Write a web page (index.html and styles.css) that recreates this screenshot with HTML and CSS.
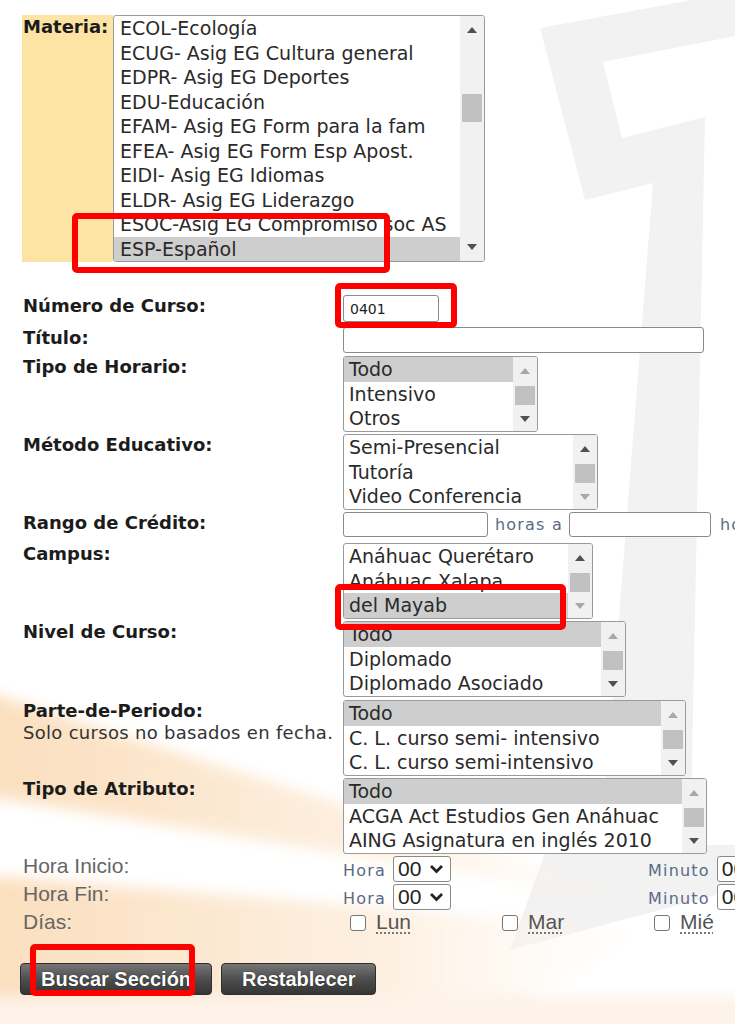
FILE: index.html
```html
<!doctype html>
<html lang="es">
<head>
    <meta charset="UTF-8">
    <meta name="viewport" content="width=device-width, initial-scale=1.0">
    <title>Consulta de Clases</title>
    <link rel="stylesheet" href="styles.css">
</head>
<body>
<svg class="backdrop" width="735" height="1024" viewBox="0 0 735 1024">
    <defs>
        <filter id="soft" x="-20%" y="-20%" width="140%" height="140%">
            <feGaussianBlur stdDeviation="7"/>
        </filter>
        <linearGradient id="glow" x1="0" y1="0" x2="1" y2="0">
            <stop offset="0" stop-color="#fbd9b2"/>
            <stop offset="0.6" stop-color="#fdeedd"/>
            <stop offset="1" stop-color="#fff8f0" stop-opacity="0"/>
        </linearGradient>
    </defs>
    <g fill="#f2f2f2">
        <path d="M540 28 L735 -8 L735 36 L603 62 L622 138 L705 117 L690 860 L600 860 L653 183 L585 200 Z"/>
        <path d="M548 845 L735 845 L735 890 L510 950 Z"/>
    </g>
    <g filter="url(#soft)" opacity="0.85">
        <path fill="url(#glow)" d="M-20 690 L660 905 L-20 795 Z"/>
        <path fill="url(#glow)" d="M-20 875 L660 930 L430 1044 L-20 1044 Z"/>
        <rect x="-20" y="996" width="820" height="50" fill="#fdf1e4"/>
    </g>
</svg>

<div class="page">
    <div class="subjectRow">
        <div class="subjectLabel">Materia:</div>
        <div class="listBox lbSubject">
            <ul class="options">
                <li>ECOL-Ecología</li>
                <li>ECUG- Asig EG Cultura general</li>
                <li>EDPR- Asig EG Deportes</li>
                <li>EDU-Educación</li>
                <li>EFAM- Asig EG Form para la fam</li>
                <li>EFEA- Asig EG Form Esp Apost.</li>
                <li>EIDI- Asig EG Idiomas</li>
                <li>ELDR- Asig EG Liderazgo</li>
                <li>ESOC-Asig EG Compromiso soc AS</li>
                <li class="selected">ESP-Español</li>
            </ul>
            <div class="scrollTrack">
                <span class="arrow up"></span>
                <span class="thumb" style="margin-top: 50px; height: 28px"></span>
                <span class="arrow down"></span>
            </div>
        </div>
    </div>

    <div class="searchForm">
        <div class="label">Número de Curso:</div>
        <div class="field"><input class="textBox wCourse" type="text" value="0401"></div>

        <div class="label">Título:</div>
        <div class="field"><input class="textBox wTitle" type="text"></div>

        <div class="label">Tipo de Horario:</div>
        <div class="field">
            <div class="listBox lbSchedule">
                <ul class="options">
                    <li class="selected">Todo</li>
                    <li>Intensivo</li>
                    <li>Otros</li>
                </ul>
                <div class="scrollTrack">
                    <span class="arrow up dim"></span>
                    <span class="thumb"></span>
                    <span class="arrow down"></span>
                </div>
            </div>
        </div>

        <div class="label">Método Educativo:</div>
        <div class="field">
            <div class="listBox lbMethod">
                <ul class="options">
                    <li>Semi-Presencial</li>
                    <li>Tutoría</li>
                    <li>Video Conferencia</li>
                </ul>
                <div class="scrollTrack">
                    <span class="arrow up"></span>
                    <span class="thumb"></span>
                    <span class="arrow down dim"></span>
                </div>
            </div>
        </div>

        <div class="label">Rango de Crédito:</div>
        <div class="field inline">
            <input class="textBox wCredit" type="text">
            <span class="unit">horas a</span>
            <input class="textBox wCredit2" type="text">
            <span class="unit after">horas</span>
        </div>

        <div class="label">Campus:</div>
        <div class="field">
            <div class="listBox lbCampus">
                <ul class="options">
                    <li>Anáhuac Querétaro</li>
                    <li>Anáhuac Xalapa</li>
                    <li class="selected">del Mayab</li>
                </ul>
                <div class="scrollTrack">
                    <span class="arrow up"></span>
                    <span class="thumb"></span>
                    <span class="arrow down dim"></span>
                </div>
            </div>
        </div>

        <div class="label">Nivel de Curso:</div>
        <div class="field">
            <div class="listBox lbLevel">
                <ul class="options">
                    <li class="selected">Todo</li>
                    <li>Diplomado</li>
                    <li>Diplomado Asociado</li>
                </ul>
                <div class="scrollTrack">
                    <span class="arrow up dim"></span>
                    <span class="thumb"></span>
                    <span class="arrow down"></span>
                </div>
            </div>
        </div>

        <div class="label">Parte-de-Periodo:<span class="note">Solo cursos no basados en fecha.</span></div>
        <div class="field">
            <div class="listBox lbPart">
                <ul class="options">
                    <li class="selected">Todo</li>
                    <li>C. L. curso semi- intensivo</li>
                    <li>C. L. curso semi-intensivo</li>
                </ul>
                <div class="scrollTrack">
                    <span class="arrow up dim"></span>
                    <span class="thumb"></span>
                    <span class="arrow down"></span>
                </div>
            </div>
        </div>

        <div class="label">Tipo de Atributo:</div>
        <div class="field">
            <div class="listBox lbAttr">
                <ul class="options">
                    <li class="selected">Todo</li>
                    <li>ACGA Act Estudios Gen Anáhuac</li>
                    <li>AING Asignatura en inglés 2010</li>
                </ul>
                <div class="scrollTrack">
                    <span class="arrow up dim"></span>
                    <span class="thumb"></span>
                    <span class="arrow down"></span>
                </div>
            </div>
        </div>

        <div class="plainLabel">Hora Inicio:</div>
        <div class="field timeRow">
            <div class="timePart">
                <span class="unit">Hora</span>
                <div class="dropBox">00<svg width="15" height="10" viewBox="0 0 15 10"><path d="M2 2 L7.5 7.5 L13 2" fill="none" stroke="#222" stroke-width="2.8"/></svg></div>
            </div>
            <div class="timePart">
                <span class="unit">Minuto</span>
                <div class="dropBox">00<svg width="15" height="10" viewBox="0 0 15 10"><path d="M2 2 L7.5 7.5 L13 2" fill="none" stroke="#222" stroke-width="2.8"/></svg></div>
            </div>
        </div>

        <div class="plainLabel">Hora Fin:</div>
        <div class="field timeRow">
            <div class="timePart">
                <span class="unit">Hora</span>
                <div class="dropBox">00<svg width="15" height="10" viewBox="0 0 15 10"><path d="M2 2 L7.5 7.5 L13 2" fill="none" stroke="#222" stroke-width="2.8"/></svg></div>
            </div>
            <div class="timePart">
                <span class="unit">Minuto</span>
                <div class="dropBox">00<svg width="15" height="10" viewBox="0 0 15 10"><path d="M2 2 L7.5 7.5 L13 2" fill="none" stroke="#222" stroke-width="2.8"/></svg></div>
            </div>
        </div>

        <div class="plainLabel">Días:</div>
        <div class="field dayGrid">
            <label class="day"><input type="checkbox"><span>Lun</span></label>
            <label class="day"><input type="checkbox"><span>Mar</span></label>
            <label class="day"><input type="checkbox"><span>Mié</span></label>
        </div>
    </div>

    <div class="actions">
        <button type="button">Buscar Sección</button>
        <button type="button">Restablecer</button>
    </div>
</div>

<div class="mark markSubject"></div>
<div class="mark markCourse"></div>
<div class="mark markCampus"></div>
<div class="mark markSearch"></div>
</body>
</html>
```

FILE: styles.css
```css
html, body {
    margin: 0;
    height: 100%;
    overflow: hidden;
}
body {
    position: relative;
    background: #fff;
    font-family: "DejaVu Sans", Verdana, sans-serif;
    color: #222;
}
.backdrop {
    position: absolute;
    top: 0;
    left: 0;
    z-index: -1;
}
.page {
    padding: 15px 0 0 22px;
}

.subjectRow {
    display: flex;
}
.subjectLabel {
    width: 91px;
    height: 247px;
    box-sizing: border-box;
    padding: 1px 0 0 1px;
    background: #fde4a4;
    font-size: 18px;
    font-weight: bold;
    line-height: 22px;
    color: #1c1c1c;
}

.listBox {
    display: flex;
    height: 76px;
    box-sizing: border-box;
    border: 1px solid #9a9a9a;
    border-radius: 3px;
    background: #fff;
    overflow: hidden;
}
.lbSubject { width: 372px; height: 247px; }
.lbSchedule { width: 195px; }
.lbMethod { width: 255px; }
.lbCampus { width: 250px; }
.lbLevel { width: 283px; }
.lbPart { width: 343px; }
.lbAttr { width: 364px; }

.options {
    flex: 1;
    min-width: 0;
    list-style: none;
    margin: 0;
    padding: 0;
}
.options li {
    height: 24.5px;
    padding-left: 5px;
    font-size: 19px;
    line-height: 24.5px;
    white-space: nowrap;
    overflow: hidden;
    color: #2a2a2a;
}
.lbSubject .options li {
    padding-left: 6px;
}
.options li.selected {
    background: #cecece;
}

.scrollTrack {
    display: flex;
    flex-direction: column;
    flex: none;
    width: 24px;
    background: #f1f1f1;
}
.arrow {
    display: flex;
    flex: none;
    align-items: center;
    justify-content: center;
    height: 28px;
    color: #505050;
}
.arrow.dim {
    color: #a8a8a8;
}
.arrow::after {
    content: "";
    border-left: 5px solid transparent;
    border-right: 5px solid transparent;
}
.arrow.up::after {
    border-bottom: 6px solid currentColor;
}
.arrow.down {
    margin-top: auto;
}
.arrow.down::after {
    border-top: 6px solid currentColor;
}
.thumb {
    flex: none;
    height: 19px;
    margin: 1px 2px 0;
    background: #c1c1c1;
}

.searchForm {
    display: grid;
    grid-template-columns: 320px 1fr;
    grid-template-rows: 32px 29px 78px 78px 31px 78px 79px 78px 78px 28px 28px 51px;
    margin-top: 33px;
    padding-left: 1px;
}
.label {
    font-size: 18px;
    font-weight: bold;
    line-height: 22px;
    color: #1c1c1c;
    white-space: nowrap;
}
.label .note {
    display: block;
    font-weight: normal;
    letter-spacing: 0.3px;
    line-height: 21px;
    color: #333;
}
.plainLabel {
    font-family: "Liberation Sans", Arial, sans-serif;
    font-size: 21px;
    line-height: 20px;
    color: #666;
}
.field {
    min-width: 0;
    white-space: nowrap;
}
.inline {
    display: flex;
    align-items: flex-start;
}

.textBox {
    display: block;
    flex: none;
    height: 27px;
    margin: 0;
    padding: 0 6px;
    box-sizing: border-box;
    border: 1px solid #8a8a8a;
    border-radius: 3px;
    background: #fff;
    font-family: "DejaVu Sans", Verdana, sans-serif;
    font-size: 14px;
    color: #222;
    outline: none;
}
.wCourse { width: 96px; }
.wTitle { width: 361px; height: 26px; }
.wCredit { width: 145px; height: 25px; }
.wCredit2 { width: 142px; height: 25px; }

.unit {
    flex: none;
    font-size: 16px;
    letter-spacing: 1.2px;
    line-height: 25px;
    color: #5a6b85;
}
.inline .unit {
    margin: 0 6px 0 7px;
}
.inline .unit.after {
    margin-left: 9px;
}

.timeRow {
    display: flex;
}
.timePart {
    display: flex;
    flex: none;
    align-items: center;
    width: 305px;
    height: 26px;
}
.timePart .unit {
    line-height: 26px;
    padding-top: 4px;
}
.dropBox {
    display: flex;
    flex: none;
    align-items: center;
    justify-content: space-between;
    width: 58px;
    height: 26px;
    margin-left: 7px;
    padding: 0 6px 0 4px;
    box-sizing: border-box;
    border: 1px solid #8a8a8a;
    border-radius: 3px;
    background: #fff;
    font-family: "Liberation Sans", Arial, sans-serif;
    font-size: 21px;
    color: #222;
}

.dayGrid {
    display: grid;
    grid-template-columns: repeat(3, 152px);
    align-items: start;
}
.day {
    display: flex;
    align-items: flex-start;
    gap: 10px;
    padding-left: 7px;
    font-family: "Liberation Sans", Arial, sans-serif;
    font-size: 21px;
    line-height: 20px;
    color: #555;
}
.day span {
    text-decoration: underline dotted #777;
    text-underline-offset: 3px;
}
.day input {
    appearance: none;
    width: 16px;
    height: 16px;
    margin: 3px 0 0;
    border: 1px solid #767676;
    border-radius: 3px;
    background: #fff;
}

.actions {
    display: flex;
    gap: 9px;
    margin-left: -2px;
}
.actions button {
    height: 32px;
    padding: 0 20px;
    border: 1px solid #2e2e2e;
    border-radius: 4px;
    background: linear-gradient(#767676, #4e4e4e 50%, #353535);
    color: #fff;
    font-family: "Liberation Sans", Arial, sans-serif;
    font-size: 20px;
    font-weight: bold;
    text-shadow: 0 0 1px #000;
    cursor: pointer;
}

.mark {
    position: absolute;
    box-sizing: border-box;
    border: 6px solid #f00;
    border-radius: 5px;
}
.markSubject { left: 72px; top: 213px; width: 318px; height: 60px; }
.markCourse { left: 335px; top: 283px; width: 122px; height: 45px; }
.markCampus { left: 335px; top: 584px; width: 231px; height: 46px; }
.markSearch { left: 30px; top: 944px; width: 165px; height: 52px; }
```
